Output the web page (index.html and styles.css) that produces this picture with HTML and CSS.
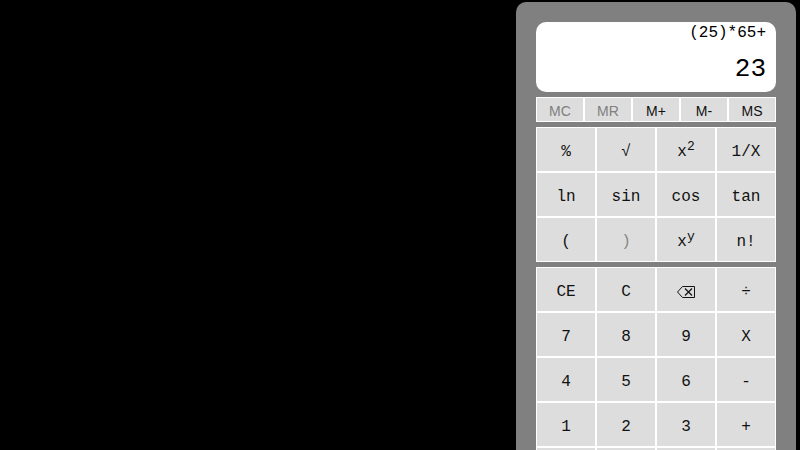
FILE: index.html
```html
<!DOCTYPE html>
<html>
<head>
<meta charset="utf-8">
<link rel="stylesheet" href="styles.css">
</head>
<body>
<div class="calc">
  <div class="display">
    <div class="expr">(25)*65+</div>
    <div class="result">23</div>
  </div>
  <div class="memory">
    <button class="mbtn off">MC</button>
    <button class="mbtn off">MR</button>
    <button class="mbtn">M+</button>
    <button class="mbtn">M-</button>
    <button class="mbtn">MS</button>
  </div>
  <div class="grid">
    <button class="btn">%</button>
    <button class="btn">√</button>
    <button class="btn">x<sup>2</sup></button>
    <button class="btn">1/X</button>
    <button class="btn">ln</button>
    <button class="btn">sin</button>
    <button class="btn">cos</button>
    <button class="btn">tan</button>
    <button class="btn">(</button>
    <button class="btn off">)</button>
    <button class="btn">x<sup>y</sup></button>
    <button class="btn">n!</button>
  </div>
  <div class="grid">
    <button class="btn">CE</button>
    <button class="btn">C</button>
    <button class="btn" aria-label="backspace"><svg class="bksp" width="18" height="12" viewBox="0 0 18 12"><path d="M5.5 0.5 H17.5 V11.5 H5.5 L0.5 6 Z" fill="none" stroke="#111" stroke-width="1"/><path d="M8 2.5 L15 9.5 M15 2.5 L8 9.5" stroke="#111" stroke-width="1.2"/></svg></button>
    <button class="btn">÷</button>
    <button class="btn">7</button>
    <button class="btn">8</button>
    <button class="btn">9</button>
    <button class="btn">X</button>
    <button class="btn">4</button>
    <button class="btn">5</button>
    <button class="btn">6</button>
    <button class="btn">-</button>
    <button class="btn">1</button>
    <button class="btn">2</button>
    <button class="btn">3</button>
    <button class="btn">+</button>
    <button class="btn">±</button>
    <button class="btn">0</button>
    <button class="btn">.</button>
    <button class="btn">=</button>
  </div>
</div>
</body>
</html>
```
FILE: styles.css
```css
html, body {
  margin: 0;
  padding: 0;
  background: #000;
  overflow: hidden;
}
.calc {
  margin: 2px 0 0 516px;
  width: 240px;
  padding: 20px;
  background: #808080;
  border-radius: 10px;
  display: flex;
  flex-direction: column;
  gap: 5px;
  font-family: "Liberation Mono", "DejaVu Sans Mono", monospace;
}
.display {
  height: 70px;
  background: #fff;
  border-radius: 10px;
  box-sizing: border-box;
  padding: 1px 10px 0 10px;
  text-align: right;
  color: #000;
}
.expr {
  font-size: 16px;
  line-height: 20px;
}
.result {
  font-size: 26px;
  line-height: 30px;
  margin-top: 11px;
}
.memory {
  display: grid;
  grid-template-columns: repeat(5, 1fr);
}
.mbtn {
  height: 25px;
  margin: 0;
  padding: 2px 0 0 0;
  border: 1px solid #fff;
  background: #ddd;
  font-family: "Liberation Sans", Arial, sans-serif;
  font-size: 14px;
  color: #111;
}
.mbtn.off {
  color: #808080;
}
.grid {
  display: grid;
  grid-template-columns: repeat(4, 1fr);
}
.btn {
  height: 45px;
  margin: 0;
  padding: 4px 0 0 0;
  border: 1px solid #fff;
  background: #ddd;
  font-family: "Liberation Mono", "DejaVu Sans Mono", monospace;
  font-size: 16px;
  color: #111;
}
.btn.off {
  color: #888;
}
.btn sup {
  font-size: 13px;
  line-height: 0;
}
.bksp {
  display: block;
  margin: 0 auto;
}
```
